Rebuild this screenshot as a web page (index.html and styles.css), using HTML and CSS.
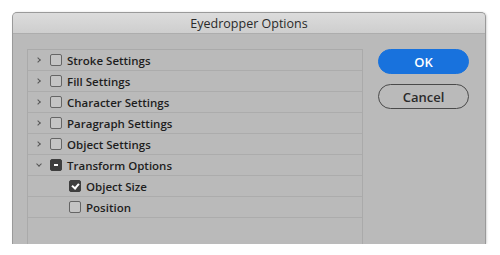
FILE: index.html
```html
<!DOCTYPE html>
<html lang="en">
<head>
  <meta charset="UTF-8">
  <title>Eyedropper Options</title>
  <link rel="stylesheet" href="styles.css">
</head>
<body>
  <div class="dialog">
    <div class="title-bar">Eyedropper Options</div>
    <div class="dialog-body">
      <ul class="tree">
        <li class="row"><span class="chevron"></span><span class="box"></span>Stroke Settings</li>
        <li class="row"><span class="chevron"></span><span class="box"></span>Fill Settings</li>
        <li class="row"><span class="chevron"></span><span class="box"></span>Character Settings</li>
        <li class="row"><span class="chevron"></span><span class="box"></span>Paragraph Settings</li>
        <li class="row"><span class="chevron"></span><span class="box"></span>Object Settings</li>
        <li class="row"><span class="chevron open"></span><span class="box mixed"></span>Transform Options</li>
        <li class="row child"><span class="box checked"></span>Object Size</li>
        <li class="row child"><span class="box"></span>Position</li>
      </ul>
      <div class="buttons">
        <button class="btn primary">OK</button>
        <button class="btn">Cancel</button>
      </div>
    </div>
  </div>
</body>
</html>
```
FILE: styles.css
```css
body {
  margin: 0;
  background-color: white;
  font-family: "Open Sans", "Noto Sans", Arial, sans-serif;
  color: #1e1e1e;
}
.dialog {
  margin: 12px 0 0 12px;
  width: 472px;
  height: 231px;
  overflow: hidden;
  background-color: #bababa;
  border: 1px solid #9a9a9a;
  border-bottom: none;
  border-radius: 5px 5px 0 0;
  box-shadow: 1px 0 2px rgba(0, 0, 0, 0.15);
}
.title-bar {
  height: 20px;
  line-height: 21px;
  text-align: center;
  font-size: 12.5px;
  color: #2a2a2a;
  background: linear-gradient(#dcdcdc, #cecece);
  border-bottom: 1px solid #adadad;
}
.dialog-body {
  display: flex;
  align-items: flex-start;
  padding: 15px 0 0 14px;
}
.tree {
  list-style: none;
  margin: 0;
  padding: 0;
  width: 334px;
  height: 240px;
  border: 1px solid #aaaaaa;
}
.row {
  display: flex;
  align-items: center;
  height: 20px;
  border-bottom: 1px solid #acacac;
  font-size: 11.5px;
  font-weight: 600;
  padding-left: 8px;
}
.row.child {
  padding-left: 41px;
}
.chevron {
  width: 6px;
  height: 6px;
  margin-right: 8px;
  position: relative;
}
.chevron::before {
  content: "";
  position: absolute;
  left: 0;
  top: 1px;
  width: 3px;
  height: 3px;
  border-right: 1px solid #555;
  border-bottom: 1px solid #555;
  transform: rotate(-45deg);
}
.chevron.open::before {
  left: 1px;
  top: 0;
  transform: rotate(45deg);
}
.box {
  width: 10px;
  height: 10px;
  border: 1px solid #656565;
  border-radius: 2px;
  background-color: #c4c4c4;
  margin-right: 5px;
  position: relative;
  flex-shrink: 0;
}
.box.mixed,
.box.checked {
  background-color: #3e3e3e;
  border-color: #3e3e3e;
}
.box.mixed::after {
  content: "";
  position: absolute;
  left: 3px;
  top: 4px;
  width: 4px;
  height: 2px;
  background-color: white;
}
.box.checked::after {
  content: "";
  position: absolute;
  left: 3px;
  top: 1px;
  width: 3px;
  height: 5px;
  border-right: 2px solid white;
  border-bottom: 2px solid white;
  transform: rotate(40deg);
}
.buttons {
  display: flex;
  flex-direction: column;
  gap: 10px;
  margin-left: 15px;
}
.btn {
  width: 91px;
  height: 25px;
  border-radius: 13px;
  border: 1px solid #4a4a4a;
  background-color: transparent;
  font-family: "Open Sans", "Noto Sans", Arial, sans-serif;
  font-size: 13px;
  font-weight: 600;
  color: #2a2a2a;
  padding: 0;
}
.btn.primary {
  background-color: #1872dd;
  border-color: #1872dd;
  color: white;
}
```
